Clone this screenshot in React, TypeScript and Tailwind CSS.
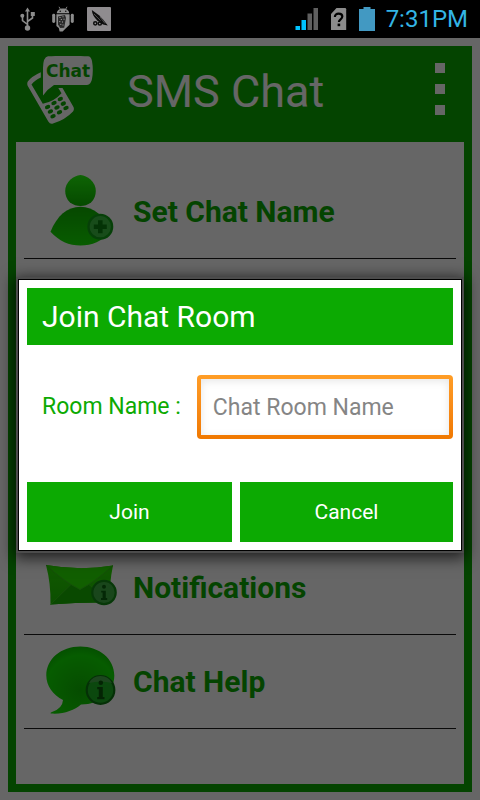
import type { ReactNode } from "react";

function UsbIcon() {
  return (
    <svg viewBox="0 0 16 24" className="h-6 w-4" fill="none" stroke="#8c8c8c" strokeWidth="1.6">
      <path d="M7.5 3v16M7.5 17.5L2.5 13.5V9M7.5 14.5L12.5 11V8" />
      <path d="M7.5 0.5L10 4.5H5z" fill="#8c8c8c" stroke="none" />
      <circle cx="7.5" cy="21" r="2.7" fill="#8c8c8c" stroke="none" />
      <circle cx="2.3" cy="8.7" r="2" fill="#8c8c8c" stroke="none" />
      <rect x="10.8" y="5" width="4" height="4" fill="#8c8c8c" stroke="none" />
    </svg>
  );
}

function AndroidIcon() {
  return (
    <svg viewBox="0 0 22 26" className="h-[26px] w-[22px]" fill="#8c8c8c">
      <path d="M4.8 7.2C5 4.4 7.6 2.6 11 2.6s6 1.8 6.2 4.6z" />
      <path d="M7 0.8l1.5 2.6M15 0.8l-1.5 2.6" stroke="#8c8c8c" strokeWidth="0.9" />
      <circle cx="8.2" cy="5.2" r="0.7" fill="#000" />
      <circle cx="13.8" cy="5.2" r="0.7" fill="#000" />
      <rect x="0.2" y="7.8" width="3" height="9.2" rx="1.4" />
      <rect x="18.8" y="7.8" width="3" height="9.2" rx="1.4" />
      <path d="M4.4 8.2h13.2v10.6l-4 3.6-3 3H7.6l-.8-3.4-2.4-2z" />
      <path d="M6 10.5l7-1.4 1 3-1.8 9.6-4 .3L6 18.5z" fill="#2a2a2a" />
      <path
        d="M7.5 11.5h1M10.5 10.8h1M8.8 13.5h1M11.5 13.2h1M7.3 15.6h1M10 16h1M8.3 18.4h1M10.5 19h1"
        stroke="#aaa"
        strokeWidth="1"
      />
    </svg>
  );
}

function BirdIcon() {
  return (
    <svg viewBox="0 0 24 24" className="h-6 w-6">
      <rect width="24" height="24" rx="1" fill="#8f8c8f" />
      <path d="M4.800 3L12 8.200L16 12.400L20.800 18.400L16 17.600L10 13.200C7.200 10.500 5.200 7.500 4.800 3z" fill="#0c0c0c" />
      <path d="M7 7l6.500 6.500M13 10l5 6.500" stroke="#8f8c8f" strokeWidth="0.5" />
      <circle cx="8.300" cy="16.300" r="1.600" fill="none" stroke="#0c0c0c" strokeWidth="1.500" />
      <circle cx="12.800" cy="16.500" r="1.600" fill="none" stroke="#0c0c0c" strokeWidth="1.500" />
    </svg>
  );
}

function SignalIcon() {
  return (
    <svg viewBox="0 0 24 24" className="h-6 w-6">
      <rect x="0.5" y="19" width="4.5" height="4" fill="#00c3ff" />
      <rect x="6.5" y="13" width="4.5" height="10" fill="#00c3ff" />
      <rect x="12.5" y="6.5" width="4.5" height="16.5" fill="#5f5f5f" />
      <rect x="18.500" y="1" width="4.5" height="22" fill="#5f5f5f" />
    </svg>
  );
}

function SimIcon() {
  return (
    <svg viewBox="0 0 16 22" className="h-[22px] w-4">
      <path d="M5.5 0H14a1.2 1.2 0 0 1 1.2 1.2V22H0V6z" fill="#8c8c8c" />
      <path
        d="M3.9 9c0-2 1.5-3.4 3.7-3.4s3.7 1.2 3.7 3c0 2.7-3.4 2.8-3.4 5.400"
        fill="none"
        stroke="#000"
        strokeWidth="2.2"
      />
      <rect x="6.6" y="15.6" width="2.6" height="2.6" fill="#000" />
    </svg>
  );
}

function BatteryIcon() {
  return (
    <svg viewBox="0 0 16 24" className="h-6 w-4">
      <path d="M4.5 0h7v2H16v22H0V2h4.5z" fill="#4299c2" />
    </svg>
  );
}

function ChatLogo() {
  return (
    <svg viewBox="0 0 68 70" className="h-[70px] w-[68px]" fill="#fff">
      <path d="M21 0.3Q41 -0.7 61 0.3Q64 0.5 65 5Q66.6 14 65 23Q64 28.5 60 29H27Q20.5 33 16 39.5V12Q16.2 1 21 0.3z" />
      <text
        x="19"
        y="21"
        className="font-['DejaVu_Sans',sans-serif] text-[17px] font-bold"
        fill="#0caa02"
      >
        Chat
      </text>
      <path d="M13.8 16.3Q4.5 20.5 0.8 25.5Q-0.3 27.5 0.8 30L21.3 65.5Q23 68.3 26 67.5Q38 64 46 55.5Q47.5 53.5 46.5 51L35.5 32H31.3L34.5 37.3Q27.5 45.5 15.8 47.8L4.500 28.5Q7.5 24.5 13.8 21.5z" />
      <g fill="#0caa02">
        <ellipse cx="33.3" cy="43" rx="2.8" ry="2" transform="rotate(-25 33.3 43)" />
        <ellipse cx="27" cy="47" rx="2.8" ry="2" transform="rotate(-25 27 47)" />
        <ellipse cx="20.6" cy="51" rx="2.8" ry="2" transform="rotate(-25 20.6 51)" />
        <ellipse cx="36.3" cy="47.6" rx="2.8" ry="2" transform="rotate(-25 36.3 47.6)" />
        <ellipse cx="30" cy="51.5" rx="2.8" ry="2" transform="rotate(-25 30 51.5)" />
        <ellipse cx="23.4" cy="55.5" rx="2.8" ry="2" transform="rotate(-25 23.4 55.5)" />
        <ellipse cx="39" cy="52" rx="2.8" ry="2" transform="rotate(-25 39 52)" />
        <ellipse cx="32.5" cy="56.3" rx="2.8" ry="2" transform="rotate(-25 32.5 56.3)" />
        <ellipse cx="26" cy="60.3" rx="2.8" ry="2" transform="rotate(-25 26 60.3)" />
      </g>
    </svg>
  );
}

function UserAddIcon() {
  return (
    <svg viewBox="0 0 76 75" className="h-[75px] w-[76px] shrink-0">
      <defs>
        <linearGradient id="head" x1="0" y1="0" x2="0" y2="1">
          <stop offset="0" stopColor="#24fa0c" />
          <stop offset="1" stopColor="#0eb800" />
        </linearGradient>
        <linearGradient id="body" x1="0" y1="0" x2="0" y2="1">
          <stop offset="0" stopColor="#0fb400" />
          <stop offset="1" stopColor="#14e600" />
        </linearGradient>
      </defs>
      <path
        d="M36.5 1Q42 1.5 46.5 5.5Q51.8 10.5 51.8 17Q51.8 24 47 28.5Q42 32 36.5 32Q31 32 26 28.5Q21.2 24 21.2 17Q21.2 10.5 26.5 5.5Q31 1.5 36.5 1z"
        fill="url(#head)"
      />
      <path
        d="M6.5 57.7C13 42 23 32.8 36.5 32.8S60 42 66.5 57.7C58 67 48 71.5 36.5 71.5S15 67 6.5 57.7z"
        fill="url(#body)"
      />
      <circle cx="56.3" cy="52.7" r="11.8" fill="#3cbe42" stroke="#10a016" strokeWidth="2.4" />
      <path d="M56.3 46.2v13M49.8 52.7h13" stroke="#0c8010" strokeWidth="4.6" />
    </svg>
  );
}

function EnvelopeIcon() {
  return (
    <svg viewBox="0 0 76 75" className="h-[75px] w-[76px] shrink-0">
      <defs>
        <linearGradient id="mail" x1="0" y1="0" x2="0" y2="1">
          <stop offset="0" stopColor="#2ce000" />
          <stop offset="1" stopColor="#1cc400" />
        </linearGradient>
      </defs>
      <path d="M2 15Q36 21 69 15.500Q65 34 66 52.500Q36 52 6.500 54.500Q7 34 2 15z" fill="url(#mail)" />
      <path d="M6.5 54.5L27 34.5L36 39.5L45 34.5L66 52.5Q36 52 6.5 54.5z" fill="#18b600" />
      <path d="M2 15Q36 21 69 15.500Q52 31 36 39.500Q19 31 2 15z" fill="#2cee00" />
      <path
        d="M2 15Q19 31 36 39.5Q52 31 69 15.5M6.5 54.5L27 34.5M66 52.5L45 34.5"
        fill="none"
        stroke="#35c818"
        strokeWidth="1"
      />
      <circle cx="60" cy="42.500" r="11.700" fill="#40b044" stroke="#128c16" strokeWidth="2.200" />
      <circle cx="60" cy="36.8" r="2" fill="#0c6410" />
      <path d="M57.2 40.8H61.8V48H63.2V50H57V48H58.600V42.600H57.2z" fill="#0c6410" />
    </svg>
  );
}

function BubbleIcon() {
  return (
    <svg viewBox="0 0 76 75" className="h-[75px] w-[76px] shrink-0">
      <defs>
        <radialGradient id="bubble" cx="0.5" cy="0.65" r="0.65">
          <stop offset="0" stopColor="#0ebe00" />
          <stop offset="0.8" stopColor="#10e600" />
          <stop offset="1" stopColor="#0cc800" />
        </radialGradient>
      </defs>
      <path
        d="M36.3 2.5C55.5 2.5 70.3 15 70.3 31.5S55.5 60.7 37 60.5C30 66.5 19 70.5 7 69.5Q5.5 69 8 68Q18.5 64.5 19 56C9 51 2.3 42 2.3 31.5C2.3 15 17 2.5 36.3 2.5z"
        fill="url(#bubble)"
      />
      <circle cx="56.5" cy="46" r="13.8" fill="#1cb424" stroke="#0c7810" strokeWidth="2.2" />
      <path d="M45 39a13 13 0 0 1 23 0Q56.5 36 45 39z" fill="#48b04c" />
      <circle cx="56.8" cy="38.7" r="2.3" fill="#0a5a0c" />
      <path d="M53.2 43H58.8V53H60.5V55.3H53.2V53H54.8V45.3H53.2z" fill="#0a5a0c" />
    </svg>
  );
}

function MenuRow({ icon, children }: { icon: ReactNode; children: ReactNode }) {
  return (
    <li className="border-b border-[#1a1a1a]">
      <button className="flex h-[93px] w-full items-center gap-[13px] pl-5 text-left text-[30px] font-bold text-[#0caa02]">
        {icon}
        <span>{children}</span>
      </button>
    </li>
  );
}

function StatusBar() {
  return (
    <div className="flex h-[38px] items-center bg-black pr-3 pl-5">
      <UsbIcon />
      <div className="ml-4 flex items-center gap-[13px]">
        <AndroidIcon />
        <BirdIcon />
      </div>
      <div className="ml-auto flex items-center gap-3">
        <SignalIcon />
        <SimIcon />
        <BatteryIcon />
        <span className="-ml-px text-[24px] leading-[38px] text-[#33b5e5]">7:31PM</span>
      </div>
    </div>
  );
}

function JoinDialog() {
  return (
    <form
      role="dialog"
      aria-labelledby="dialog-title"
      onSubmit={(e) => e.preventDefault()}
      className="w-full border border-black bg-white p-2 shadow-[0_0_0_2px_#4c4c4c,0_3px_14px_4px_rgba(0,0,0,0.7)]"
    >
      <h2 id="dialog-title" className="bg-[#0caa02] pl-[15px] text-[30px] leading-[57px] text-white">
        Join Chat Room
      </h2>

      <div className="mt-[30px] flex items-center gap-4 pl-[15px]">
        <label htmlFor="room" className="shrink-0 text-[23px] text-[#0caa02]">
          Room Name :
        </label>
        {/* Focused field, orange frame */}
        <div className="min-w-0 flex-1 rounded bg-linear-to-b from-[#ff9d26] to-[#f07800] p-1">
          <input
            id="room"
            type="text"
            placeholder="Chat Room Name"
            className="block h-14 w-full bg-white px-3 text-[23px] shadow-[inset_0_2px_8px_rgba(0,0,0,0.1)] outline-none placeholder:text-[#858585]"
          />
        </div>
      </div>

      <div className="mt-[43px] grid grid-cols-2 text-[21px] leading-[60px] text-white">
        <button type="submit" className="mr-2 bg-[#0caa02]">
          Join
        </button>
        <button type="button" className="bg-[#0caa02]">
          Cancel
        </button>
      </div>
    </form>
  );
}

export default function App() {
  return (
    <div className="flex min-h-screen flex-col font-[Roboto,sans-serif]">
      <StatusBar />

      <div className="relative flex flex-1 flex-col bg-white p-2">
        <main className="flex flex-1 flex-col bg-[#0caa02] px-2 pb-2">
          <header className="flex h-24 items-center pr-[19px] pb-[6px] pl-[11px]">
            <ChatLogo />
            <h1 className="ml-8 text-[45px] leading-none text-white">SMS Chat</h1>
            <button aria-label="Menu" className="ml-auto flex flex-col gap-[11px] pb-1">
              <span className="size-[10px] bg-white" />
              <span className="size-[10px] bg-white" />
              <span className="size-[10px] bg-white" />
            </button>
          </header>

          <ul className="flex-1 bg-white px-2 pt-[23px] pb-12">
            <MenuRow icon={<UserAddIcon />}>Set Chat Name</MenuRow>
            <li aria-hidden="true" className="h-[282px]" />
            <MenuRow icon={<EnvelopeIcon />}>Notifications</MenuRow>
            <MenuRow icon={<BubbleIcon />}>Chat Help</MenuRow>
          </ul>
        </main>

        {/* Dim layer with the dialog on top */}
        <div className="absolute inset-0 flex items-center bg-black/60 px-[18px] pb-2">
          <JoinDialog />
        </div>
      </div>
    </div>
  );
}
